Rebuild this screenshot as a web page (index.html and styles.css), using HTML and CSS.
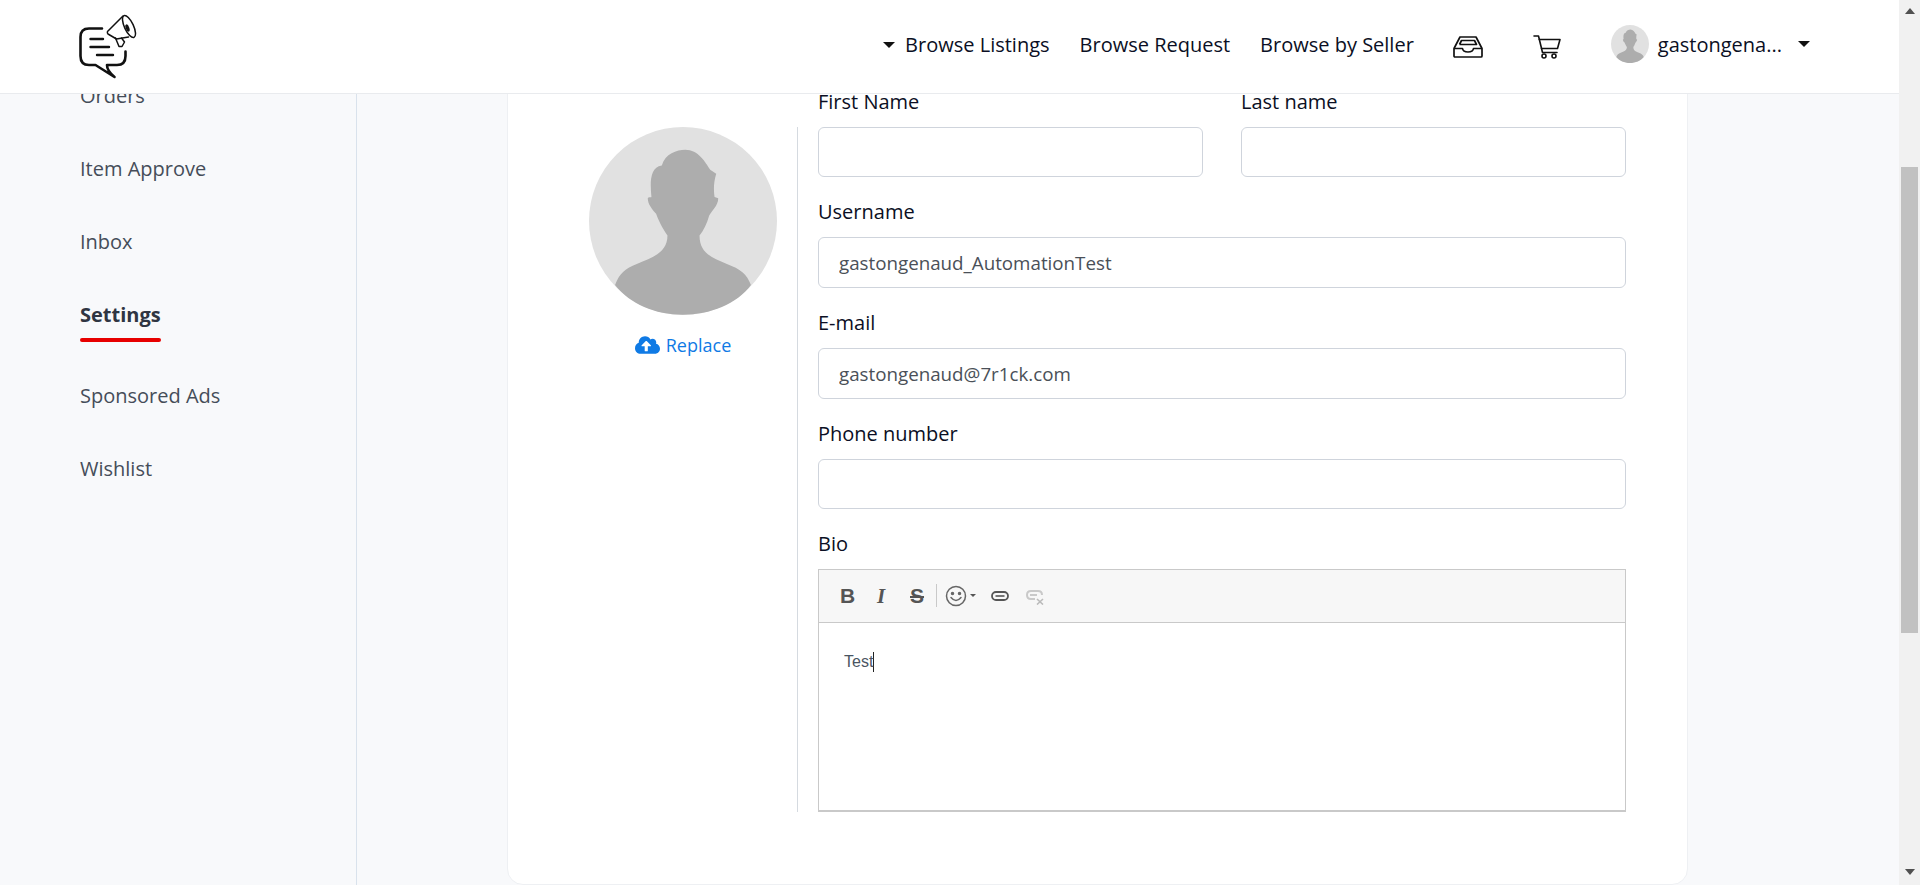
FILE: index.html
```html
<!DOCTYPE html>
<html lang="en">
<head>
<meta charset="utf-8">
<title>Settings</title>
<link rel="stylesheet" href="styles.css">
</head>
<body>
<svg class="defs" width="0" height="0" aria-hidden="true">
  <symbol id="person" viewBox="57 50 563 563">
    <circle cx="338.500" cy="331.500" r="281.500" fill="#e1e1e1"/>
    <path fill="#adadad" d="M135 523C150 485 165 475 200 460C250 440 292 425 292 375C275 350 265 330 258 310C245 295 233 280 233 263C236 258 242 262 244 260C240 220 238 170 275 165C285 130 320 118 345 118C385 118 405 155 420 178L438 190C430 215 430 240 433 260L444 263C444 285 425 300 417 315C410 340 400 360 388 375C388 425 420 440 470 460C510 475 530 490 542 523C500 580 420 612 338 612C255 612 180 580 135 523Z"/>
  </symbol>
</svg>
<div class="viewport">
  <div class="page">
    <header class="topbar">
      <svg class="logo" viewBox="78 14 60 66" width="60" height="66" fill="none" stroke="#111" stroke-linecap="round" stroke-linejoin="round">
        <path stroke-width="2.600" d="M102 28.500H89Q80.500 28.500 80.500 37V56Q80.500 65 89 65H95.500L114.500 77Q107 71 107 65H117Q125.500 65 125.500 56V51.500"/>
        <path stroke-width="2.400" d="M90.500 39H103M90.500 47H109M97 55H113"/>
        <path stroke-width="1.500" stroke-linejoin="round" fill="#fff" d="M123 16L107.500 31.500Q107 33 108 34L116.500 39L128.500 37"/>
        <path stroke-width="1.500" d="M115.500 38L119 46.500L122 46.500L124.500 42L121.500 38"/>
        <ellipse stroke-width="1.500" fill="#fff" cx="129" cy="26.500" rx="4.500" ry="12" transform="rotate(-25 129 26.500)"/>
        <ellipse fill="#111" stroke="none" cx="127.500" cy="28" rx="1.800" ry="3.800" transform="rotate(-20 127.500 28)"/>
      </svg>
      <nav class="topnav">
        <span class="caret"></span>
        <a class="navlink navlink-first">Browse Listings</a>
        <a class="navlink">Browse Request</a>
        <a class="navlink">Browse by Seller</a>
        <svg class="ico-inbox" viewBox="0 0 30 22" width="30" height="22" fill="none" stroke="#111" stroke-width="1.700" stroke-linejoin="round">
          <path d="M1 12.500L7 1H23L29 12.500V20Q29 21 28 21H2Q1 21 1 20Z"/>
          <path d="M1 12.500H9.500Q10 16 15 16Q20 16 20.500 12.500H29"/>
          <path d="M6.500 8.500L8.500 4.500H21.500L23.500 8.500H6.500"/>
        </svg>
        <svg class="ico-cart" viewBox="0 0 28 24" width="28" height="24" fill="none" stroke="#111" stroke-width="1.600" stroke-linejoin="round" stroke-linecap="round">
          <path d="M1 1H5.500L9.500 17.500H24"/>
          <path d="M6.300 4.500H27L24.500 13.500H8.500"/>
          <circle cx="11" cy="21" r="2"/>
          <circle cx="21" cy="21" r="2"/>
        </svg>
        <svg class="avatar-small" width="38" height="38"><use href="#person"/></svg>
        <span class="username">gastongena...</span>
        <span class="caret caret-user"></span>
      </nav>
    </header>
    <div class="main">
      <aside class="sidebar">
        <a class="side-item">Orders</a>
        <a class="side-item">Item Approve</a>
        <a class="side-item">Inbox</a>
        <a class="side-item side-active">Settings</a>
        <a class="side-item">Sponsored Ads</a>
        <a class="side-item">Wishlist</a>
      </aside>
      <section class="content">
        <div class="card">
          <div class="photo-col">
            <svg class="avatar-large" width="188" height="188"><use href="#person"/></svg>
            <a class="replace">
              <svg viewBox="0 0 640 512" width="25" height="20" fill="#0f7ae5"><path d="M537.600 226.600c4.100-10.700 6.400-22.400 6.400-34.600 0-53-43-96-96-96-19.700 0-38.100 6-53.300 16.200C367 64.200 315.300 32 256 32c-88.400 0-160 71.600-160 160 0 2.700.1 5.400.2 8.100C40.200 219.800 0 273.200 0 336c0 79.500 64.500 144 144 144h368c70.700 0 128-57.300 128-128 0-61.900-44-113.600-102.400-125.400zM393.400 288H328v112c0 8.800-7.200 16-16 16h-48c-8.800 0-16-7.200-16-16V288h-65.400c-14.300 0-21.400-17.200-11.300-27.300l105.400-105.400c6.200-6.200 16.400-6.200 22.600 0l105.400 105.400c10.100 10.100 3 27.300-11.300 27.300z"/></svg>
              <span>Replace</span>
            </a>
          </div>
          <form class="form-col">
            <div class="row-two">
              <div class="field">
                <label class="label">First Name</label>
                <input class="input" type="text">
              </div>
              <div class="field">
                <label class="label">Last name</label>
                <input class="input" type="text">
              </div>
            </div>
            <div class="field">
              <label class="label">Username</label>
              <input class="input" type="text" value="gastongenaud_AutomationTest">
            </div>
            <div class="field">
              <label class="label">E-mail</label>
              <input class="input" type="text" value="gastongenaud@7r1ck.com">
            </div>
            <div class="field">
              <label class="label">Phone number</label>
              <input class="input" type="text">
            </div>
            <div class="field">
              <label class="label">Bio</label>
              <div class="editor">
                <div class="toolbar">
                  <span class="tool tool-b">B</span>
                  <span class="tool tool-i">I</span>
                  <span class="tool tool-s">S</span>
                  <span class="tool-sep"></span>
                  <svg class="tool-smile" viewBox="0 0 22 22" width="22" height="22" fill="none" stroke="#666" stroke-width="1.500" stroke-linecap="round">
                    <circle cx="11" cy="11" r="9.500"/>
                    <path d="M6 12.500Q11 18.500 16 12.500"/>
                    <circle cx="7.500" cy="8.500" r="1" fill="#666"/>
                    <circle cx="14.500" cy="8.500" r="1" fill="#666"/>
                  </svg>
                  <span class="tool-caret"></span>
                  <svg class="tool-link" viewBox="0 0 18 10" width="18" height="10" fill="none" stroke="#555" stroke-width="1.800">
                    <rect x="1" y="1" width="16" height="8" rx="4"/>
                    <path stroke-width="1.600" d="M4.500 5H13.500"/>
                  </svg>
                  <svg class="tool-unlink" viewBox="0 0 19 15" width="19" height="15" fill="none" stroke="#c9c9c9" stroke-width="2">
                    <path d="M9 9H5Q1 9 1 5Q1 1 5 1H12Q16 1 16 5"/>
                    <path d="M4 5H11"/>
                    <path stroke="#bbb" stroke-width="1.600" d="M11 9L17 14.500M17 9L11 14.500"/>
                  </svg>
                </div>
                <div class="editor-body"><span class="editor-text">Test</span></div>
              </div>
            </div>
          </form>
        </div>
      </section>
    </div>
  </div>
  <div class="scrollbar">
    <span class="arrow-up"></span>
    <span class="thumb"></span>
    <span class="arrow-down"></span>
  </div>
</div>
</body>
</html>
```

FILE: styles.css
```css
* { box-sizing: border-box; }
html, body { margin: 0; height: 100%; overflow: hidden; }
body { font-family: "Open Sans", sans-serif; font-size: 20px; color: #0b0f24; background: #f8f9fb; }
.defs { position: absolute; }
.viewport { display: flex; height: 885px; }
.page { flex: 1; min-width: 0; display: flex; flex-direction: column; height: 885px; }
.scrollbar { width: 21px; background: #f1f1f1; display: flex; flex-direction: column; align-items: center; padding-top: 8px; }
.arrow-up { width: 0; height: 0; border-left: 5px solid transparent; border-right: 5px solid transparent; border-bottom: 6px solid #505050; }
.thumb { width: 17px; height: 466px; background: #c1c1c1; margin-top: 153px; }
.arrow-down { width: 0; height: 0; border-left: 5px solid transparent; border-right: 5px solid transparent; border-top: 6px solid #505050; margin-top: 236px; }

.topbar { height: 94px; flex: none; background: #fff; border-bottom: 1px solid #e9ebee; display: flex; align-items: flex-start; justify-content: space-between; padding: 14px 89px 0 78px; position: relative; z-index: 2; }
.logo { display: block; }
.topnav { display: flex; align-items: center; height: 62px; color: #0b0f24; }
.navlink { line-height: 26px; margin-left: 30px; }
.navlink-first { margin-left: 10px; }
.caret { width: 0; height: 0; border-left: 6px solid transparent; border-right: 6px solid transparent; border-top: 6px solid #111; }
.caret-user { margin-left: 16px; margin-top: -3px; }
.ico-inbox { margin-left: 39px; margin-top: 3px; }
.ico-cart { margin-left: 50px; margin-top: 3px; }
.avatar-small { margin-left: 50px; margin-top: -2px; display: block; }
.username { margin-left: 9px; line-height: 26px; }

.main { flex: 1; min-height: 0; display: flex; overflow: hidden; }
.sidebar { width: 357px; flex: none; border-right: 1px solid #d9e2ec; padding: 0 0 0 80px; display: flex; flex-direction: column; align-items: flex-start; background: #f8f9fb; color: #454d59; }
.side-item { line-height: 26px; margin-bottom: 47px; position: relative; }
.side-item:first-child { margin-top: -11px; }
.side-active { font-weight: 700; color: #2f3542; margin-bottom: 55px; }
.side-active::after { content: ""; position: absolute; left: 0; right: 0; bottom: -14px; height: 4px; border-radius: 2px; background: #e70000; }

.content { flex: 1; min-width: 0; padding-left: 150px; padding-right: 211px; }
.card { height: 821px; margin-top: -30px; background: #fff; border: 1px solid #eef0f3; border-radius: 0 0 16px 16px; display: flex; align-items: flex-start; padding: 22.800px 61px 0 81px; }

.photo-col { width: 188px; flex: none; margin-top: 39.200px; display: flex; flex-direction: column; align-items: center; }
.avatar-large { display: block; }
.replace { display: flex; align-items: center; gap: 6px; margin-top: 18px; font-size: 18px; line-height: 24px; color: #0f7ae5; }
.form-col { flex: 1; margin-left: 20px; padding-left: 21px; display: flex; flex-direction: column; gap: 20.930px; position: relative; }
.form-col::before { content: ""; position: absolute; left: 0; top: 39px; bottom: 0; width: 1px; background: #d5dae0; }
.row-two { display: flex; gap: 38px; }
.row-two .field { flex: 1; }
.field { display: flex; flex-direction: column; }
.label { display: block; line-height: 27px; margin-bottom: 12px; color: #0b0f24; }
.input { display: block; width: 100%; height: 50.670px; border: 1px solid #cfd4dc; border-radius: 6px; padding: 0 20px; font-family: "Open Sans", sans-serif; font-size: 18.750px; color: #4a5058; background: #fff; outline: none; }

.editor { height: 243px; border: 1px solid #c9c9c9; border-bottom-width: 2px; display: flex; flex-direction: column; }
.toolbar { height: 53px; flex: none; background: #f7f7f7; border-bottom: 1px solid #c9c9c9; display: flex; align-items: center; padding: 0 0 1px 21px; color: #555; }
.tool { width: 14px; font-size: 21px; line-height: 24px; text-align: center; }
.tool-b { font-family: "Liberation Sans", sans-serif; font-weight: 700; }
.tool-i { margin-left: 20px; font-family: "Liberation Serif", serif; font-weight: 700; font-style: italic; }
.tool-s { margin-left: 22px; font-family: "Liberation Sans", sans-serif; font-weight: 700; text-decoration: line-through; }
.tool-sep { width: 1px; height: 23px; background: #c9c9c9; margin-left: 12px; }
.tool-smile { margin-left: 8px; }
.tool-caret { width: 0; height: 0; border-left: 3px solid transparent; border-right: 3px solid transparent; border-top: 3px solid #555; margin-left: 3px; }
.tool-link { margin-left: 15px; }
.tool-unlink { margin-left: 17px; margin-top: 3px; }
.editor-body { padding: 23px 0 0 25px; }
.editor-text { display: inline-block; font-family: "Liberation Sans", sans-serif; font-size: 16px; line-height: 20px; color: #4a5562; border-right: 1px solid #222; }
```
